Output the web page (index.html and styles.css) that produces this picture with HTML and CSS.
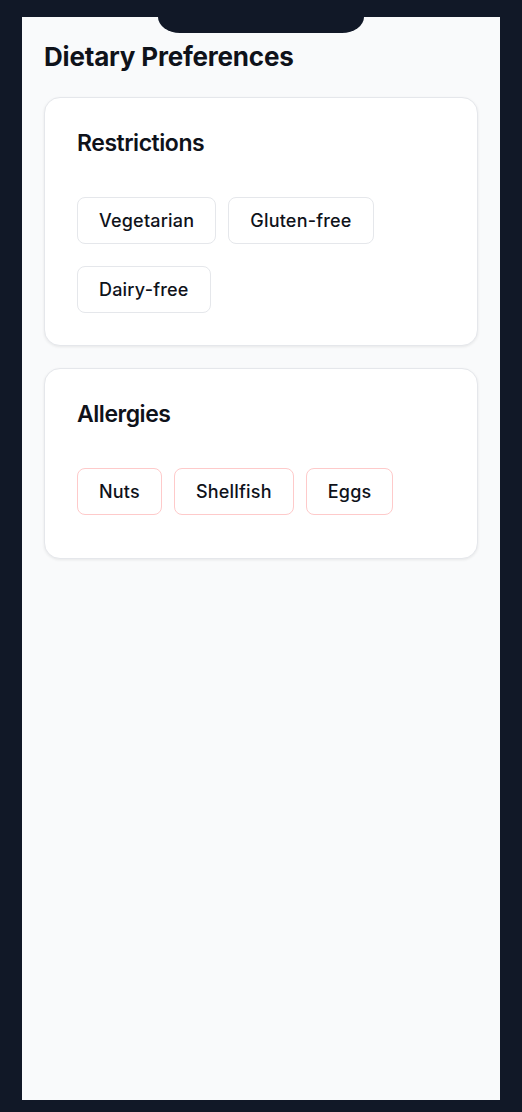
FILE: index.html
```html
<!DOCTYPE html>
<html lang="en">
<head>
<meta charset="utf-8">
<title>Dietary Preferences</title>
<link rel="stylesheet" href="styles.css">
</head>
<body>
<div class="phone">
  <div class="screen">
    <div class="notch"></div>
    <h1 class="title">Dietary Preferences</h1>
    <section class="card">
      <h2 class="card-title">Restrictions</h2>
      <div class="chips">
        <span class="chip">Vegetarian</span>
        <span class="chip">Gluten-free</span>
        <span class="chip">Dairy-free</span>
      </div>
    </section>
    <section class="card card-allergies">
      <h2 class="card-title">Allergies</h2>
      <div class="chips">
        <span class="chip chip-allergy">Nuts</span>
        <span class="chip chip-allergy">Shellfish</span>
        <span class="chip chip-allergy">Eggs</span>
      </div>
    </section>
  </div>
</div>
</body>
</html>
```

FILE: styles.css
```css
* { box-sizing: border-box; }
html, body {
  margin: 0;
  padding: 0;
  background: #111827;
  font-family: Inter, "Noto Sans", sans-serif;
  color: #111827;
}
.phone {
  padding: 17px 22px 12px 22px;
}
.screen {
  position: relative;
  width: 478px;
  height: 1083px;
  background: #f9fafb;
  padding: 25px 22px 24px;
}
.notch {
  position: absolute;
  top: 0;
  left: 50%;
  width: 206px;
  height: 16px;
  margin-left: -103px;
  background: #111827;
  border-radius: 0 0 22px 22px / 0 0 16px 16px;
}
.title {
  margin: 0 0 25px;
  font-size: 26px;
  line-height: 30px;
  font-weight: 700;
  letter-spacing: -0.2px;
  color: #0f121a;
}
.card {
  background: #fff;
  border: 1px solid #e5e7eb;
  border-radius: 16px;
  box-shadow: 0 1px 3px rgba(0, 0, 0, 0.08);
  padding: 32px;
  margin-bottom: 22px;
}
.card-allergies {
  padding-bottom: 43px;
}
.card-title {
  margin: 0 0 41px;
  font-size: 23px;
  line-height: 26px;
  font-weight: 600;
  letter-spacing: -0.02em;
  color: #0f121a;
}
.chips {
  display: flex;
  flex-wrap: wrap;
  gap: 22px 12px;
}
.chip {
  display: inline-block;
  background: #fff;
  border: 1px solid #e5e7eb;
  border-radius: 8px;
  padding: 9px 21px;
  font-size: 18px;
  line-height: 27px;
  font-weight: 500;
  letter-spacing: 0.2px;
  color: #0f121a;
}
.chip-allergy {
  border-color: #fecaca;
}
```
